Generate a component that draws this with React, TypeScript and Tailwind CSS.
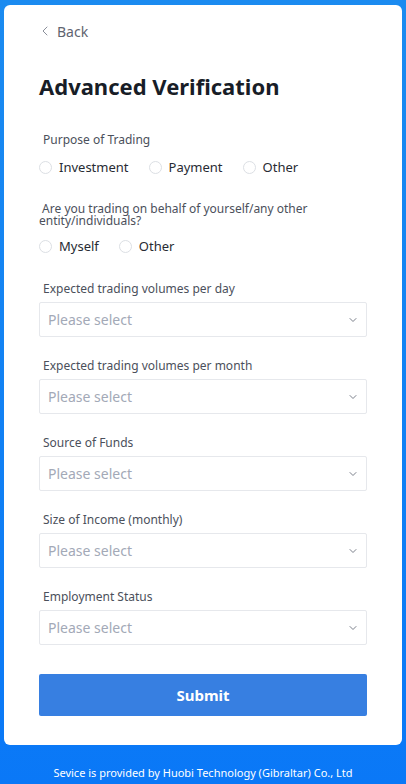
import { ChevronLeft, ChevronDown } from "lucide-react";

const font = { fontFamily: '"Noto Sans", "Open Sans", sans-serif' };

const Radio = ({ label }: { label: string }) => (
	<label className="flex items-center mr-[20px] cursor-pointer">
		<span className="w-[13px] h-[13px] rounded-full border border-[#dcdfe4] bg-white" />
		<span className="ml-[7px] text-[13px] leading-[20px] text-[#272b33]">{label}</span>
	</label>
);

const SelectField = ({ label, first }: { label: string; first?: boolean }) => (
	<div className={first ? "mt-[25px]" : "mt-[21px]"}>
		<p className="pl-[4px] text-[12px] leading-[16px] text-[#4b505b]">{label}</p>
		<div className="mt-[5px] h-[35px] flex items-center justify-between border border-[#e6e8ec] rounded-[2px] pl-[8px] pr-[7px]">
			<span className="text-[14px] text-[#a3a9b7]">Please select</span>
			<ChevronDown className="w-[12px] h-[12px] text-[#7b808b]" strokeWidth={2} />
		</div>
	</div>
);

export default function App() {
	return (
		<div
			className="min-h-[784px] flex flex-col px-[4px] pt-[5px] bg-gradient-to-b from-[#1b8bf0] to-[#0a78f7]"
			style={font}
		>
			<div className="bg-white rounded-[6px] h-[740px] px-[35px] pt-[16px]">
				<div className="flex items-center h-[20px] text-[#5f6470]">
					<ChevronLeft className="w-[16px] h-[16px] ml-[-2px] text-[#8a8f9a]" strokeWidth={1.5} />
					<span className="ml-[4px] text-[14px]">Back</span>
				</div>

				<h1 className="mt-[30px] text-[22px] leading-[30px] font-bold text-[#181d27]">
					Advanced Verification
				</h1>

				<p className="mt-[31px] pl-[4px] text-[12px] leading-[16px] text-[#4b505b]">
					Purpose of Trading
				</p>
				<div className="mt-[9px] flex items-center">
					<Radio label="Investment" />
					<Radio label="Payment" />
					<Radio label="Other" />
				</div>

				<p className="mt-[26px] max-w-[310px] text-[12px] leading-[12px] text-[#4b505b]">
					&nbsp;Are you trading on behalf of yourself/any other entity/individuals?
				</p>
				<div className="mt-[9px] flex items-center">
					<Radio label="Myself" />
					<Radio label="Other" />
				</div>

				<SelectField label="Expected trading volumes per day" first />
				<SelectField label="Expected trading volumes per month" />
				<SelectField label="Source of Funds" />
				<SelectField label="Size of Income (monthly)" />
				<SelectField label="Employment Status" />

				<button className="mt-[29px] w-full h-[42px] rounded-[2px] bg-[#377fe1] text-white text-[15px] font-bold">
					Submit
				</button>
			</div>

			<p className="mt-[20px] text-center text-[11px] leading-[16px] text-white">
				Sevice is provided by Huobi Technology (Gibraltar) Co., Ltd
			</p>
		</div>
	);
}
